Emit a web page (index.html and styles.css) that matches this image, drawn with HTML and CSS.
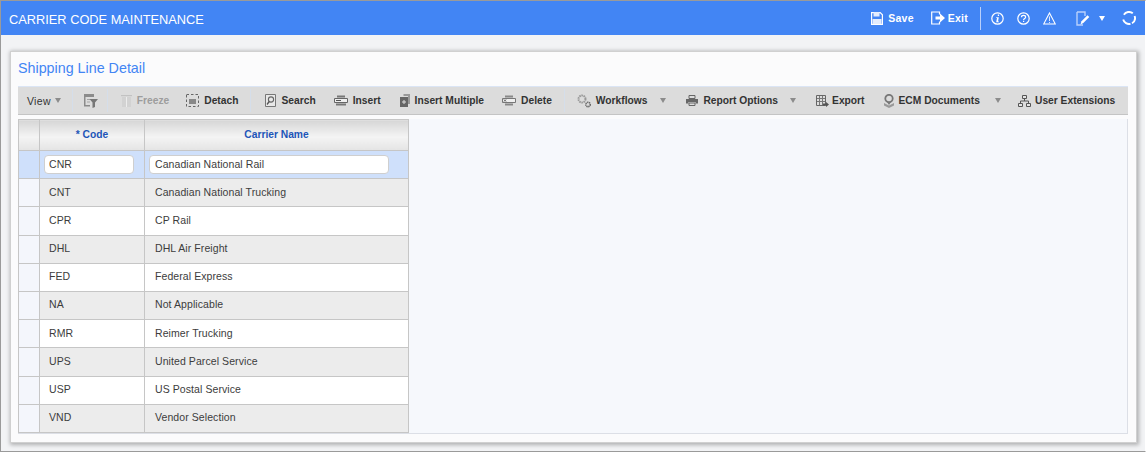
FILE: index.html
```html
<!DOCTYPE html>
<html lang="en">
<head>
<meta charset="utf-8">
<title>Carrier Code Maintenance</title>
<link rel="stylesheet" href="styles.css">
</head>
<body>
<div class="app">
  <header class="topbar">
    <h1 class="title">CARRIER CODE MAINTENANCE</h1>
    <div class="top-actions">
      <button class="top-btn save">
        <svg width="12" height="13" viewBox="0 0 12 13"><path d="M.6.6h8.600L11.400 2.800v9.600H.6z" fill="none" stroke="#fff" stroke-width="1.200"/><path d="M2.500 0h6v4.500h-6zM1.500 7h9v5h-9z" fill="#e3ecfd"/></svg>
        <span>Save</span>
      </button>
      <button class="top-btn exit">
        <svg width="14" height="14" viewBox="0 0 14 14"><path d="M8.500 3.500V1H.7v12h7.800v-2.500" fill="none" stroke="#fff" stroke-width="1.200"/><path d="M4.500 5.500H9V2.500L14 7 9 11.500v-3H4.500z" fill="#fff"/></svg>
        <span>Exit</span>
      </button>
      <span class="top-sep"></span>
      <svg class="ti info" width="13" height="13" viewBox="0 0 13 13"><circle cx="6.500" cy="6.500" r="5.700" fill="none" stroke="#fff" stroke-width="1.200"/><path d="M6.800 2.600h1.300v1.400H6.800zM5.200 5.200h2.600L7 9.400h1v.9H5.200l.8-4.200H5.200z" fill="#fff"/></svg>
      <svg class="ti help" width="13" height="13" viewBox="0 0 13 13"><circle cx="6.500" cy="6.500" r="5.700" fill="none" stroke="#fff" stroke-width="1.200"/><path d="M4.500 5.200c0-2.400 4.100-2.400 4.100 0 0 1.300-2 1.400-2 2.800" fill="none" stroke="#fff" stroke-width="1.200"/><path d="M6 8.800h1.200V10H6z" fill="#fff"/></svg>
      <svg class="ti warn" width="13" height="13" viewBox="0 0 13 13"><path d="M6.500 1 12.300 12H.7z" fill="none" stroke="#fff" stroke-width="1.100"/><path d="M6 4.500h1v4.500H6zM6 10h1v1H6z" fill="#fff" opacity=".8"/></svg>
      <svg class="ti note" width="14" height="15" viewBox="0 0 14 15"><path d="M1 1h8v4M1 1v13h6" fill="none" stroke="#b9d0fb" stroke-width="1.400"/><path d="M4.500 13.500l1-3.200 6-6 1.800 1.800-6 6z" fill="#fff"/></svg>
      <span class="top-caret"></span>
      <svg class="ti refresh" width="14" height="14" viewBox="0 0 14 14"><path d="M1.900 3.800A6 6 0 0 1 10.800 2.300M12.600 5A6 6 0 0 1 10 12.200M8.500 12.800A6 6 0 0 1 1.200 8.500" fill="none" stroke="#fff" stroke-width="1.900"/></svg>
    </div>
  </header>

  <main class="content">
    <section class="card">
      <h2 class="card-title">Shipping Line Detail</h2>
      <div class="toolbar">
        <span class="tb view">View<i class="caret"></i></span>
        <span class="tb-sep s1"></span>
        <span class="tb filter"><svg width="14" height="14" viewBox="0 0 14 14"><path d="M0 0h10v3H0zM0 3h1.500v9H0zM0 11h6v1.500H0z" fill="#8b8b8b"/><path d="M3 5h3v1H3zM3 7.500h3v1H3z" fill="#a5a5a5"/><path d="M5.500 5H14l-3 3.500V13l-2.500 1V8.500z" fill="#777"/></svg></span>
        <span class="tb-sep s2"></span>
        <span class="tb freeze disabled"><svg width="11" height="14" viewBox="0 0 11 14"><path d="M0 1h11v1.200H0z" fill="#c2c2c2"/><path d="M1 3h9v10H1z" fill="#d2d2d2"/><path d="M5 3h1v10H5z" fill="#ececec"/></svg>Freeze</span>
        <span class="tb detach"><svg width="13" height="13" viewBox="0 0 13 13"><path d="M.5.500h12v12H.5z" fill="none" stroke="#666" stroke-dasharray="2.500 2"/><path d="M3 5h7v5H3z" fill="#888"/></svg>Detach</span>
        <span class="tb-sep s3"></span>
        <span class="tb search"><svg width="11" height="13" viewBox="0 0 11 13"><path d="M.5.500h10v12H.5z" fill="#e8e8e8" stroke="#777"/><circle cx="6" cy="5.500" r="2.600" fill="none" stroke="#666" stroke-width="1.100"/><path d="M4.200 7.500 2 10.500" stroke="#555" stroke-width="1.300"/></svg>Search</span>
        <span class="tb insert"><svg width="14" height="11" viewBox="0 0 14 11"><path d="M3 .5h8v2H3zM2 8.500h10v2H2z" fill="#777"/><path d="M.5 3.500h13v4H.5z" fill="#eee" stroke="#666"/><path d="M2 5.500h5" stroke="#555"/></svg>Insert</span>
        <span class="tb multi"><svg width="10" height="13" viewBox="0 0 10 13"><path d="M3.500 0H10v10H8V2H3.500z" fill="#999"/><path d="M0 3h8v10H0z" fill="#666"/><path d="M3.500 6h1v4h-1zM2 7.500h4v1H2z" fill="#ddd"/></svg>Insert Multiple</span>
        <span class="tb delete"><svg width="14" height="11" viewBox="0 0 14 11"><path d="M3 .5h8v2H3zM3 8.500h8v2H3z" fill="#888"/><path d="M.5 3.500h13v4H.5z" fill="#eee" stroke="#777"/><path d="M2 4.500l2 2M4 4.500l-2 2" stroke="#555"/></svg>Delete</span>
        <span class="tb-sep s4"></span>
        <span class="tb workflows"><svg width="15" height="14" viewBox="0 0 15 14"><circle cx="5" cy="5" r="3.500" fill="none" stroke="#999" stroke-width="2" stroke-dasharray="1.600 .6"/><circle cx="11" cy="10.500" r="2.200" fill="none" stroke="#666" stroke-width="1.600" stroke-dasharray="1.200 .5"/></svg>Workflows<i class="caret"></i></span>
        <span class="tb report"><svg width="12" height="11" viewBox="0 0 12 11"><path d="M3 .5h6v3H3z" fill="none" stroke="#666"/><path d="M0 4h12v4.500H9.500V7h-7v1.500H0z" fill="#666"/><path d="M3 8h6v2.500H3z" fill="none" stroke="#666"/></svg>Report Options<i class="caret"></i></span>
        <span class="tb export"><svg width="13" height="12" viewBox="0 0 13 12"><path d="M.5.500h9v10h-9z" fill="#ddd" stroke="#666"/><path d="M3.500 1v9M6.500 1v9M1 3.500h8M1 6.500h8" stroke="#777"/><path d="M7 8.500h3V7l3 2.500-3 2.500v-1.500H7z" fill="#555"/></svg>Export</span>
        <span class="tb ecm"><svg width="12" height="14" viewBox="0 0 12 14"><circle cx="6" cy="4.500" r="3.700" fill="none" stroke="#777" stroke-width="1.800"/><path d="M4 8h4L6 11z" fill="#777"/><path d="M1 9l5 2.500L11 9v2.500L6 14l-5-2.500z" fill="#999"/></svg>ECM Documents<i class="caret"></i></span>
        <span class="tb ext"><svg width="13" height="12" viewBox="0 0 13 12"><path d="M4.500.500h4v3h-4zM.5 8.500h4v3h-4zM8.500 8.500h4v3h-4z" fill="#e4e4e4" stroke="#555"/><path d="M6.500 3.500V6M2.500 8.500V6h8v2.500" fill="none" stroke="#555"/></svg>User Extensions</span>
      </div>

      <div class="grid-area">
        <table class="grid">
          <thead>
            <tr><th class="rh"></th><th class="code">* Code</th><th class="name">Carrier Name</th></tr>
          </thead>
          <tbody>
            <tr class="editing"><td class="rh"></td><td><input class="cell-input" value="CNR" aria-label="Code"></td><td><input class="cell-input" value="Canadian National Rail" aria-label="Carrier Name"></td></tr>
            <tr class="alt"><td class="rh"></td><td>CNT</td><td>Canadian National Trucking</td></tr>
            <tr><td class="rh"></td><td>CPR</td><td>CP Rail</td></tr>
            <tr class="alt"><td class="rh"></td><td>DHL</td><td>DHL Air Freight</td></tr>
            <tr><td class="rh"></td><td>FED</td><td>Federal Express</td></tr>
            <tr class="alt"><td class="rh"></td><td>NA</td><td>Not Applicable</td></tr>
            <tr><td class="rh"></td><td>RMR</td><td>Reimer Trucking</td></tr>
            <tr class="alt"><td class="rh"></td><td>UPS</td><td>United Parcel Service</td></tr>
            <tr><td class="rh"></td><td>USP</td><td>US Postal Service</td></tr>
            <tr class="alt"><td class="rh"></td><td>VND</td><td>Vendor Selection</td></tr>
          </tbody>
        </table>
      </div>
    </section>
  </main>
</div>
</body>
</html>
```
FILE: styles.css
```css
* { box-sizing: border-box; }
html, body { margin: 0; padding: 0; height: 100%; }
body { font-family: "Liberation Sans", Arial, sans-serif; overflow: hidden; }
.app {
  width: 1146px; height: 452px;
  border: 1px solid #9a9a9a;
  border-right-color: #fff;
  background: #f2f3f5;
  display: flex; flex-direction: column;
}
.topbar {
  height: 34px; flex: none;
  background: #4285f4;
  color: #fff;
  display: flex; align-items: center; justify-content: space-between;
}
.title { margin: 2px 0 0 8px; font-size: 12.8px; font-weight: 400; }
.top-actions { display: flex; align-items: center; }
.top-btn {
  display: flex; align-items: center;
  background: none; border: 0; padding: 0; color: #fff;
  font: bold 10.5px "Liberation Sans", Arial, sans-serif;
  letter-spacing: .25px;
}
.save { gap: 5px; }
.exit { gap: 3px; margin-left: 17px; }
.top-sep { width: 1px; height: 23px; background: #b9d0fb; margin: 0 10px 0 12px; }
.ti { display: block; flex: none; }
.help { margin-left: 13px; }
.warn { margin-left: 13px; }
.note { margin-left: 20px; }
.top-caret { width: 0; height: 0; border: 3.5px solid transparent; border-top: 5px solid #fff; border-bottom: 0; margin-left: 9px; }
.refresh { margin-left: 17px; margin-right: 9px; }

.content { flex: 1; padding: 16px 9px 8px; min-height: 0; }
.card {
  width: 1127px; height: 392px;
  background: #fbfbfc;
  border: 1px solid #d0d0d0;
  box-shadow: 1px 1px 4px 1px rgba(0,0,0,.28);
  padding: 0 8px 8px 7px;
  display: flex; flex-direction: column;
}
.card-title { flex: none; margin: 0; height: 34px; padding-top: 8px; font-size: 14.3px; font-weight: 400; color: #4285f4; line-height: 17px; }
.toolbar {
  height: 29px; flex: none; width: 1110px;
  background: #dcdcdc;
  border-top: 1px solid #dbe5f5;
  border-bottom: 1px solid #c4c4c4;
  display: flex; align-items: center;
  padding: 0 0 0 9px;
  font-size: 10.25px; font-weight: bold; color: #333;
}
.tb { display: flex; align-items: center; white-space: nowrap; }
.tb svg { flex: none; margin-right: 5px; }
.tb.filter svg { margin-right: 0; }
.view { font-weight: 400; letter-spacing: .3px; font-size: 10.5px; }
.disabled { color: #9d9d9d; }
.caret { display: block; width: 0; height: 0; border: 3.5px solid transparent; border-top: 5px solid #8c8c8c; border-bottom: 0; margin-left: 4px; }
.tb-sep { width: 1px; height: 23px; background: #d5deea; flex: none; }
.s1 { margin-left: 11px; margin-right: 11px; }
.s2 { margin-left: 9px; margin-right: 13px; }
.detach { margin-left: 17px; }
.s3 { margin: 0 14px 0 12px; }
.insert { margin-left: 18px; }
.multi { margin-left: 19px; }
.delete { margin-left: 18px; }
.s4 { margin: 0 12px 0 12px; }
.workflows svg { margin-right: 4px; }
.workflows .caret { margin-left: 13px; }
.ecm .caret { margin-left: 15px; }
.report .caret { margin-left: 12px; }
.report { margin-left: 20px; }
.export { margin-left: 20px; }
.export svg { margin-right: 3px; }
.ecm { margin-left: 18px; }
.ecm svg { margin-right: 4px; }
.ext { margin-left: 17px; }
.ext svg { margin-right: 4px; }

.grid-area {
  margin-top: 4px; flex: 1; min-height: 0; width: 1110px;
  background: #f6f8fc;
  border-right: 1px solid #dcdfe6;
  border-bottom: 1px solid #dcdfe6;
}
.grid { border-collapse: collapse; table-layout: fixed; width: 391px; font-size: 10.5px; color: #3c3c3c; }
.grid th, .grid td { border: 1px solid #c6c6c6; padding: 0; }
.grid th {
  height: 31px; font-size: 10.25px; padding-bottom: 2px;
  background: linear-gradient(#d6d6d6, #f4f4f4 55%, #e4e4e4);
  color: #1d55b8; font-weight: bold; text-align: center;
}
.grid th.rh { width: 21px; }
.grid th.code { width: 105px; }
.grid td { height: 28.2px; padding: 0 0 2.2px 9px; background: #fff; letter-spacing: .08px; }
.grid td:last-child { padding-left: 10px; }
.grid tr.alt td { background: #ececec; }
.grid td.rh { background: #f4f6fc; padding: 0; }
.grid tr.alt td.rh { background: #f4f6fc; }
.grid tr.editing td, .grid tr.editing td.rh { background: #cfe0fb; padding: 0 0 1px 4px; }
.cell-input {
  display: block; height: 19px; width: 90px;
  border: 1px solid #cfcfcf; border-radius: 4px;
  background: #fff; padding: 0 4px;
  font: 10.5px "Liberation Sans", Arial, sans-serif; color: #3c3c3c; letter-spacing: .08px;
}
td:last-child .cell-input { width: 240px; padding-left: 5px; }
```
